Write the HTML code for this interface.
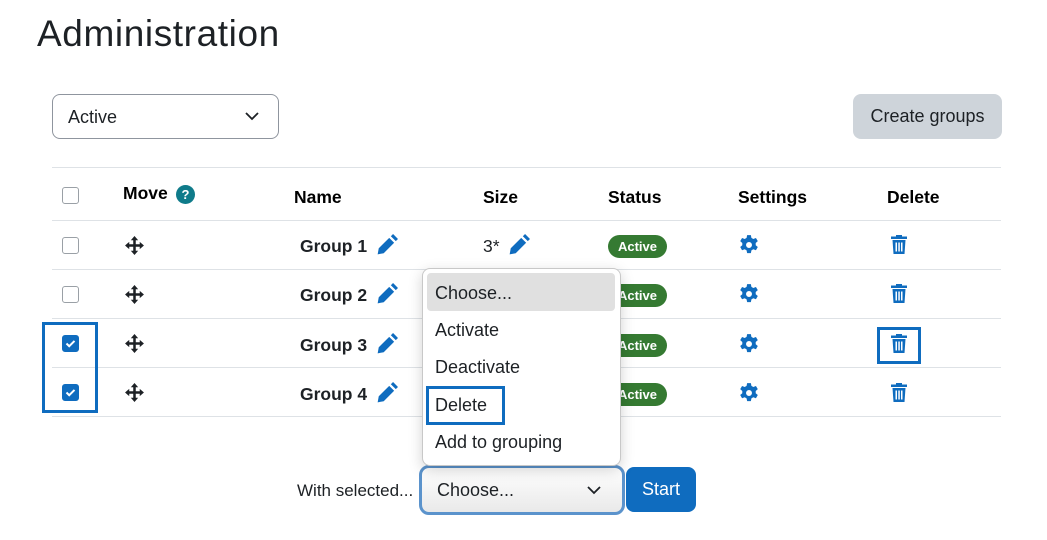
<!DOCTYPE html>
<html><head><meta charset="utf-8">
<style>
*{box-sizing:border-box;margin:0;padding:0}
body{width:1047px;height:540px;background:#fff;font-family:"Liberation Sans",sans-serif;color:#1d2125;position:relative;overflow:hidden}
.a{position:absolute}
.h{font-weight:bold;font-size:17.5px;color:#000}
.line{position:absolute;left:52px;width:949px;height:1px;background:#dee2e6}
.cb{position:absolute;left:62px;width:17px;height:17px;border:1px solid #9aa0a6;border-radius:3px;background:#fff}
.cb.on{background:#0f6cbf;border-color:#0f6cbf}
.g{font-weight:bold;font-size:17.5px;color:#1d2125}
.badge{position:absolute;left:608px;width:59px;height:23px;border-radius:12px;background:#357a32;color:#fff;font-weight:bold;font-size:13px;text-align:center;line-height:23px}
.dd{font-size:18px;color:#1d2125;position:absolute;left:435px}
</style></head><body>
<div class="a" style="left:37px;top:13px;font-size:37px;color:#1d2125;letter-spacing:0.6px">Administration</div>

<div class="a" style="left:52px;top:94px;width:227px;height:45px;border:1px solid #8f959e;border-radius:8px"></div>
<div class="a" style="left:68px;top:107px;font-size:18px">Active</div>
<svg class="a" style="left:245px;top:111px" width="14" height="10" viewBox="0 0 14 10"><path d="M1 2l6 6 6-6" fill="none" stroke="#1d2125" stroke-width="1.8"/></svg>

<div class="a" style="left:853px;top:94px;width:149px;height:45px;background:#ced4da;border-radius:8px;font-size:18px;text-align:center;line-height:45px">Create groups</div>

<div class="line" style="top:167px"></div>
<div class="line" style="top:220px"></div>
<div class="line" style="top:269px"></div>
<div class="line" style="top:318px"></div>
<div class="line" style="top:367px"></div>
<div class="line" style="top:416px"></div>

<div class="cb" style="top:187px"></div>
<div class="a h" style="left:123px;top:183px">Move</div>
<div class="a" style="left:176px;top:185px;width:19px;height:19px;border-radius:50%;background:#0f7b8a;color:#fff;font-size:13px;font-weight:bold;text-align:center;line-height:19px">?</div>
<div class="a h" style="left:294px;top:187px">Name</div>
<div class="a h" style="left:483px;top:187px">Size</div>
<div class="a h" style="left:608px;top:187px">Status</div>
<div class="a h" style="left:738px;top:187px">Settings</div>
<div class="a h" style="left:887px;top:187px">Delete</div>

<div class="cb" style="top:237px"></div>
<div class="cb" style="top:286px"></div>
<div class="cb on" style="top:335px"><svg width="15" height="15" viewBox="0 0 15 15"><path d="M3.5 7.5l2.7 2.7 5.3-5.3" fill="none" stroke="#fff" stroke-width="2"/></svg></div>
<div class="cb on" style="top:384px"><svg width="15" height="15" viewBox="0 0 15 15"><path d="M3.5 7.5l2.7 2.7 5.3-5.3" fill="none" stroke="#fff" stroke-width="2"/></svg></div>
<div class="a" style="left:42px;top:322px;width:56px;height:91px;border:3px solid #0f6cbf"></div>

<svg class="a" style="left:124px;top:235px" width="21" height="21" viewBox="0 0 20 20"><path d="M10 1l3.5 4h-2.3v3.8H15V6.5l4 3.5-4 3.5v-2.3h-3.8V15h2.3L10 19l-3.5-4h2.3v-3.8H5v2.3L1 10l4-3.5v2.3h3.8V5H6.5z" fill="#1d2125"/></svg>
<svg class="a" style="left:124px;top:284px" width="21" height="21" viewBox="0 0 20 20"><path d="M10 1l3.5 4h-2.3v3.8H15V6.5l4 3.5-4 3.5v-2.3h-3.8V15h2.3L10 19l-3.5-4h2.3v-3.8H5v2.3L1 10l4-3.5v2.3h3.8V5H6.5z" fill="#1d2125"/></svg>
<svg class="a" style="left:124px;top:333px" width="21" height="21" viewBox="0 0 20 20"><path d="M10 1l3.5 4h-2.3v3.8H15V6.5l4 3.5-4 3.5v-2.3h-3.8V15h2.3L10 19l-3.5-4h2.3v-3.8H5v2.3L1 10l4-3.5v2.3h3.8V5H6.5z" fill="#1d2125"/></svg>
<svg class="a" style="left:124px;top:382px" width="21" height="21" viewBox="0 0 20 20"><path d="M10 1l3.5 4h-2.3v3.8H15V6.5l4 3.5-4 3.5v-2.3h-3.8V15h2.3L10 19l-3.5-4h2.3v-3.8H5v2.3L1 10l4-3.5v2.3h3.8V5H6.5z" fill="#1d2125"/></svg>

<div class="a g" style="left:300px;top:236px">Group 1</div>
<div class="a g" style="left:300px;top:285px">Group 2</div>
<div class="a g" style="left:300px;top:335px">Group 3</div>
<div class="a g" style="left:300px;top:384px">Group 4</div>
<svg class="a" style="left:376px;top:234px" width="22" height="22" viewBox="0 0 20 20"><path d="M1.5 18.5l1-5.5 9.5-9.5 4.5 4.5L7 17.5zM13.5 2l2-2 4.5 4.5-2 2z" fill="#0f6cbf"/></svg>
<svg class="a" style="left:376px;top:283px" width="22" height="22" viewBox="0 0 20 20"><path d="M1.5 18.5l1-5.5 9.5-9.5 4.5 4.5L7 17.5zM13.5 2l2-2 4.5 4.5-2 2z" fill="#0f6cbf"/></svg>
<svg class="a" style="left:376px;top:333px" width="22" height="22" viewBox="0 0 20 20"><path d="M1.5 18.5l1-5.5 9.5-9.5 4.5 4.5L7 17.5zM13.5 2l2-2 4.5 4.5-2 2z" fill="#0f6cbf"/></svg>
<svg class="a" style="left:376px;top:382px" width="22" height="22" viewBox="0 0 20 20"><path d="M1.5 18.5l1-5.5 9.5-9.5 4.5 4.5L7 17.5zM13.5 2l2-2 4.5 4.5-2 2z" fill="#0f6cbf"/></svg>
<div class="a" style="left:483px;top:236px;font-size:17.5px">3*</div>
<svg class="a" style="left:508px;top:234px" width="22" height="22" viewBox="0 0 20 20"><path d="M1.5 18.5l1-5.5 9.5-9.5 4.5 4.5L7 17.5zM13.5 2l2-2 4.5 4.5-2 2z" fill="#0f6cbf"/></svg>

<div class="badge" style="top:235px">Active</div>
<div class="badge" style="top:284px">Active</div>
<div class="badge" style="top:334px">Active</div>
<div class="badge" style="top:383px">Active</div>

<svg class="a" style="left:738px;top:234px" width="22" height="22" viewBox="0 0 20 20"><path d="M8.3 1h3.4l.5 2.5 1.7 1 2.4-.9 1.7 2.9-1.9 1.7v2l1.9 1.6-1.7 3-2.4-.9-1.7 1-.5 2.5H8.3l-.5-2.5-1.7-1-2.4.9-1.7-3 1.9-1.6v-2L2 6.5l1.7-2.9 2.4.9 1.7-1z M10 7.3a2.7 2.7 0 1 0 0 5.4 2.7 2.7 0 1 0 0-5.4z" fill="#0f6cbf" fill-rule="evenodd"/></svg>
<svg class="a" style="left:738px;top:283px" width="22" height="22" viewBox="0 0 20 20"><path d="M8.3 1h3.4l.5 2.5 1.7 1 2.4-.9 1.7 2.9-1.9 1.7v2l1.9 1.6-1.7 3-2.4-.9-1.7 1-.5 2.5H8.3l-.5-2.5-1.7-1-2.4.9-1.7-3 1.9-1.6v-2L2 6.5l1.7-2.9 2.4.9 1.7-1z M10 7.3a2.7 2.7 0 1 0 0 5.4 2.7 2.7 0 1 0 0-5.4z" fill="#0f6cbf" fill-rule="evenodd"/></svg>
<svg class="a" style="left:738px;top:333px" width="22" height="22" viewBox="0 0 20 20"><path d="M8.3 1h3.4l.5 2.5 1.7 1 2.4-.9 1.7 2.9-1.9 1.7v2l1.9 1.6-1.7 3-2.4-.9-1.7 1-.5 2.5H8.3l-.5-2.5-1.7-1-2.4.9-1.7-3 1.9-1.6v-2L2 6.5l1.7-2.9 2.4.9 1.7-1z M10 7.3a2.7 2.7 0 1 0 0 5.4 2.7 2.7 0 1 0 0-5.4z" fill="#0f6cbf" fill-rule="evenodd"/></svg>
<svg class="a" style="left:738px;top:382px" width="22" height="22" viewBox="0 0 20 20"><path d="M8.3 1h3.4l.5 2.5 1.7 1 2.4-.9 1.7 2.9-1.9 1.7v2l1.9 1.6-1.7 3-2.4-.9-1.7 1-.5 2.5H8.3l-.5-2.5-1.7-1-2.4.9-1.7-3 1.9-1.6v-2L2 6.5l1.7-2.9 2.4.9 1.7-1z M10 7.3a2.7 2.7 0 1 0 0 5.4 2.7 2.7 0 1 0 0-5.4z" fill="#0f6cbf" fill-rule="evenodd"/></svg>

<svg class="a" style="left:890px;top:234px" width="18" height="21" viewBox="0 0 18 21"><path d="M6 1h6v1.5h5V5H1V2.5h5zM2.5 6h13l-1 14h-11zM5.5 8.5v9h1.5v-9zM8.3 8.5v9h1.5v-9zM11 8.5v9h1.5v-9z" fill="#0f6cbf" fill-rule="evenodd"/></svg>
<svg class="a" style="left:890px;top:283px" width="18" height="21" viewBox="0 0 18 21"><path d="M6 1h6v1.5h5V5H1V2.5h5zM2.5 6h13l-1 14h-11zM5.5 8.5v9h1.5v-9zM8.3 8.5v9h1.5v-9zM11 8.5v9h1.5v-9z" fill="#0f6cbf" fill-rule="evenodd"/></svg>
<svg class="a" style="left:890px;top:333px" width="18" height="21" viewBox="0 0 18 21"><path d="M6 1h6v1.5h5V5H1V2.5h5zM2.5 6h13l-1 14h-11zM5.5 8.5v9h1.5v-9zM8.3 8.5v9h1.5v-9zM11 8.5v9h1.5v-9z" fill="#0f6cbf" fill-rule="evenodd"/></svg>
<svg class="a" style="left:890px;top:382px" width="18" height="21" viewBox="0 0 18 21"><path d="M6 1h6v1.5h5V5H1V2.5h5zM2.5 6h13l-1 14h-11zM5.5 8.5v9h1.5v-9zM8.3 8.5v9h1.5v-9zM11 8.5v9h1.5v-9z" fill="#0f6cbf" fill-rule="evenodd"/></svg>
<div class="a" style="left:877px;top:327px;width:44px;height:37px;border:3px solid #0f6cbf"></div>

<div class="a" style="left:297px;top:481px;font-size:17px">With selected...</div>
<div class="a" style="left:419px;top:465px;width:206px;height:50px;border:3px solid #5b93cc;border-radius:10px;background:linear-gradient(#fff,#e9e9e9)"></div>
<div class="a" style="left:437px;top:480px;font-size:18px">Choose...</div>
<svg class="a" style="left:587px;top:485px" width="14" height="10" viewBox="0 0 14 10"><path d="M1 2l6 6 6-6" fill="none" stroke="#1d2125" stroke-width="1.8"/></svg>
<div class="a" style="left:626px;top:467px;width:70px;height:45px;background:#0f6cbf;border-radius:8px;color:#fff;font-size:18px;text-align:center;line-height:45px">Start</div>

<div class="a" style="left:422px;top:268px;width:199px;height:198px;background:#fff;border:1px solid #c8c8c8;border-radius:8px;box-shadow:0 4px 14px rgba(0,0,0,.18)"></div>
<div class="a" style="left:427px;top:273px;width:188px;height:38px;background:#e0e0e0;border-radius:4px"></div>
<div class="dd" style="top:283px">Choose...</div>
<div class="dd" style="top:320px">Activate</div>
<div class="dd" style="top:357px">Deactivate</div>
<div class="a" style="left:426px;top:386px;width:79px;height:39px;border:3px solid #0f6cbf"></div>
<div class="dd" style="top:395px">Delete</div>
<div class="dd" style="top:432px">Add to grouping</div>
</body></html>
